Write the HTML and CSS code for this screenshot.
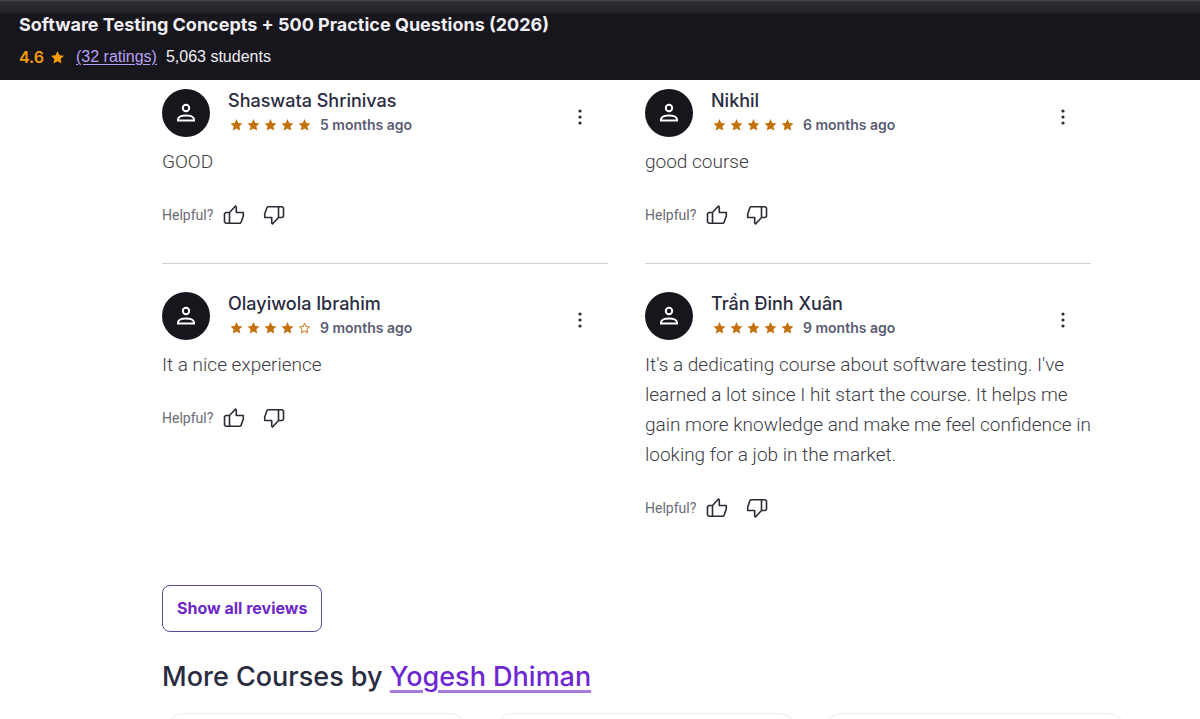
FILE: index.html
```html
<!DOCTYPE html>
<html lang="en">
<head>
<meta charset="utf-8">
<meta name="viewport" content="width=device-width, initial-scale=1">
<title>Software Testing Concepts + 500 Practice Questions (2026)</title>
<link rel="stylesheet" href="styles.css">
</head>
<body>
<svg class="sprite" aria-hidden="true">
  <symbol id="star" viewBox="0 0 24 24"><path d="M12 0l3.600 7.800 8.400 1-6.200 5.800 1.600 8.400L12 18.900l-7.400 4.100 1.600-8.400L0 8.800l8.400-1z"/></symbol>
  <symbol id="star-empty" viewBox="0 0 24 24"><path fill="none" stroke="currentColor" stroke-width="2" d="M12 2.500l2.900 6.600 7 .8-5.200 4.800 1.400 7L12 18.100l-6.100 3.600 1.400-7-5.200-4.800 7-.8z"/></symbol>
  <symbol id="person" viewBox="0 0 20 20"><g fill="none" stroke="currentColor" stroke-width="2"><circle cx="10" cy="5" r="3.200"/><path d="M2 17.500v-1c0-2.600 4-4 8-4s8 1.400 8 4v1z"/></g></symbol>
  <symbol id="thumb" viewBox="0 0 22 22"><path fill="none" stroke="currentColor" stroke-width="1.600" stroke-linejoin="round" d="M6.500 8.500 12.500 2l.8 1v5.500h7V12l-2.300 6.500-1 .8H6.500zM6.500 8.500H2.800l-1.300 1.200v8.300l1.300 1.300h3.700z"/></symbol>
  <symbol id="dots" viewBox="0 0 20 20"><circle cx="10" cy="4" r="1.600"/><circle cx="10" cy="10" r="1.600"/><circle cx="10" cy="16" r="1.600"/></symbol>
</svg>
<header class="topbar">
  <p class="course-title">Software Testing Concepts + 500 Practice Questions (2026)</p>
  <div class="course-meta">
    <span class="score">4.6</span>
    <svg class="score-star" aria-hidden="true"><use href="#star"/></svg>
    <a class="ratings" href="#reviews">(32 ratings)</a>
    <span>5,063 students</span>
  </div>
</header>
<main class="content">
  <section class="reviews" id="reviews">
    <article class="review">
      <div class="review-head">
        <span class="avatar"><svg aria-hidden="true"><use href="#person"/></svg></span>
        <div class="who">
          <h3 class="name">Shaswata Shrinivas</h3>
          <div class="rated"><span class="stars" role="img" aria-label="5 stars"><svg><use href="#star"/></svg><svg><use href="#star"/></svg><svg><use href="#star"/></svg><svg><use href="#star"/></svg><svg><use href="#star"/></svg></span><span class="age">5 months ago</span></div>
        </div>
        <button class="icon-btn more" aria-label="More options"><svg><use href="#dots"/></svg></button>
      </div>
      <p class="text">GOOD</p>
      <div class="helpful"><span>Helpful?</span><button class="icon-btn" aria-label="Helpful"><svg><use href="#thumb"/></svg></button><button class="icon-btn down" aria-label="Not helpful"><svg><use href="#thumb"/></svg></button></div>
    </article>
    <article class="review">
      <div class="review-head">
        <span class="avatar"><svg aria-hidden="true"><use href="#person"/></svg></span>
        <div class="who">
          <h3 class="name">Nikhil</h3>
          <div class="rated"><span class="stars" role="img" aria-label="5 stars"><svg><use href="#star"/></svg><svg><use href="#star"/></svg><svg><use href="#star"/></svg><svg><use href="#star"/></svg><svg><use href="#star"/></svg></span><span class="age">6 months ago</span></div>
        </div>
        <button class="icon-btn more" aria-label="More options"><svg><use href="#dots"/></svg></button>
      </div>
      <p class="text">good course</p>
      <div class="helpful"><span>Helpful?</span><button class="icon-btn" aria-label="Helpful"><svg><use href="#thumb"/></svg></button><button class="icon-btn down" aria-label="Not helpful"><svg><use href="#thumb"/></svg></button></div>
    </article>
    <article class="review divided">
      <div class="review-head">
        <span class="avatar"><svg aria-hidden="true"><use href="#person"/></svg></span>
        <div class="who">
          <h3 class="name">Olayiwola Ibrahim</h3>
          <div class="rated"><span class="stars" role="img" aria-label="4 stars"><svg><use href="#star"/></svg><svg><use href="#star"/></svg><svg><use href="#star"/></svg><svg><use href="#star"/></svg><svg><use href="#star-empty"/></svg></span><span class="age">9 months ago</span></div>
        </div>
        <button class="icon-btn more" aria-label="More options"><svg><use href="#dots"/></svg></button>
      </div>
      <p class="text">It a nice experience</p>
      <div class="helpful"><span>Helpful?</span><button class="icon-btn" aria-label="Helpful"><svg><use href="#thumb"/></svg></button><button class="icon-btn down" aria-label="Not helpful"><svg><use href="#thumb"/></svg></button></div>
    </article>
    <article class="review divided">
      <div class="review-head">
        <span class="avatar"><svg aria-hidden="true"><use href="#person"/></svg></span>
        <div class="who">
          <h3 class="name">Trần Đinh Xuân</h3>
          <div class="rated"><span class="stars" role="img" aria-label="5 stars"><svg><use href="#star"/></svg><svg><use href="#star"/></svg><svg><use href="#star"/></svg><svg><use href="#star"/></svg><svg><use href="#star"/></svg></span><span class="age">9 months ago</span></div>
        </div>
        <button class="icon-btn more" aria-label="More options"><svg><use href="#dots"/></svg></button>
      </div>
      <p class="text">It's a dedicating course about software testing. I've learned a lot since I hit start the course. It helps me gain more knowledge and make me feel confidence in looking for a job in the market.</p>
      <div class="helpful"><span>Helpful?</span><button class="icon-btn" aria-label="Helpful"><svg><use href="#thumb"/></svg></button><button class="icon-btn down" aria-label="Not helpful"><svg><use href="#thumb"/></svg></button></div>
    </article>
  </section>
  <button class="show-all">Show all reviews</button>
  <h2 class="more-title">More Courses by <a href="#instructor">Yogesh Dhiman</a></h2>
  <div class="cards"><div class="card"></div><div class="card"></div><div class="card"></div></div>
</main>
</body>
</html>
```

FILE: styles.css
```css
* { box-sizing: border-box; }
body {
  margin: 0;
  height: 100vh;
  overflow: hidden;
  background: #fff;
  color: #2a2b3f;
  font-family: Inter, "Liberation Sans", sans-serif;
}
h2, h3, p { margin: 0; }
button { font-family: inherit; cursor: pointer; }
svg { display: block; fill: currentColor; }
.sprite { display: none; }

.topbar {
  padding: 12px 19px 11px;
  background: linear-gradient(#4b4a52 0, #2c2b31 2px, #25242b 12px, #19181e 14px, #17161c 24px);
  color: #f0eff5;
}
.course-title { font-size: 18px; line-height: 26px; font-weight: 700; }
.course-meta { display: flex; align-items: center; font-family: "Liberation Sans", sans-serif; font-size: 16px; line-height: 24px; margin-top: 7px; }
.score { font-family: Inter, sans-serif; font-weight: 600; color: #f69c08; }
.score-star { width: 13px; height: 13px; margin: 0 12px 0 7px; color: #f69c08; }
.ratings { color: #b9a0f5; margin-right: 9px; text-underline-offset: 2px; }

.content { padding: 9px 109px 0 162px; }
.reviews { display: grid; grid-template-columns: 1fr 1fr; column-gap: 37px; }
.divided { border-top: 1px solid #d1d2d8; padding-top: 28px; margin-top: 36px; }
.review-head { display: flex; align-items: center; }
.avatar {
  display: flex;
  align-items: center;
  justify-content: center;
  width: 48px;
  height: 48px;
  border-radius: 50%;
  background: #16161d;
  color: #fff;
}
.avatar svg { width: 20px; height: 20px; }
.who { flex: 1; margin-left: 18px; }
.name { font-size: 18px; line-height: 24px; font-weight: 500; }
.rated { display: flex; align-items: center; line-height: 24px; }
.stars { display: flex; gap: 4px; margin: 0 9px 0 2px; color: #c4710d; }
.stars svg { width: 13px; height: 12px; }
.age { font-size: 14px; font-weight: 600; color: #595c73; }
.icon-btn { padding: 0; border: 0; background: none; color: #2a2b35; }
.icon-btn svg { width: 22px; height: 22px; }
.more { margin: 8px 18px 0 0; }
.more svg { width: 20px; height: 20px; }
.text { margin-top: 10px; font-family: Roboto, "Liberation Sans", sans-serif; font-size: 19px; line-height: 30px; font-weight: 300; color: #3c3c44; }
.helpful { display: flex; align-items: center; margin-top: 26px; height: 24px; font-family: Roboto, "Liberation Sans", sans-serif; font-size: 14px; color: #6a6b74; }
.helpful .icon-btn { margin-left: 10px; }
.helpful .down { margin-left: 18px; }
.down svg { transform: rotate(180deg); }

.show-all {
  display: block;
  margin-top: 65px;
  padding: 10px 14px 11px;
  border: 1px solid #5b4a9c;
  border-radius: 8px;
  background: #fff;
  color: #6d28c9;
  font-size: 16px;
  line-height: 24px;
  font-weight: 700;
}
.more-title { margin-top: 27px; font-size: 27px; line-height: 36px; font-weight: 500; }
.more-title a {
  color: #6d28d2;
  text-decoration-color: #a77be0;
  text-decoration-thickness: 3px;
  text-underline-offset: 4px;
}
.cards { display: grid; grid-template-columns: repeat(3, 1fr); gap: 29px; margin: 18px -34px 0 5px; }
.card { height: 300px; border: 1px solid #ececf0; border-radius: 16px; }
```
